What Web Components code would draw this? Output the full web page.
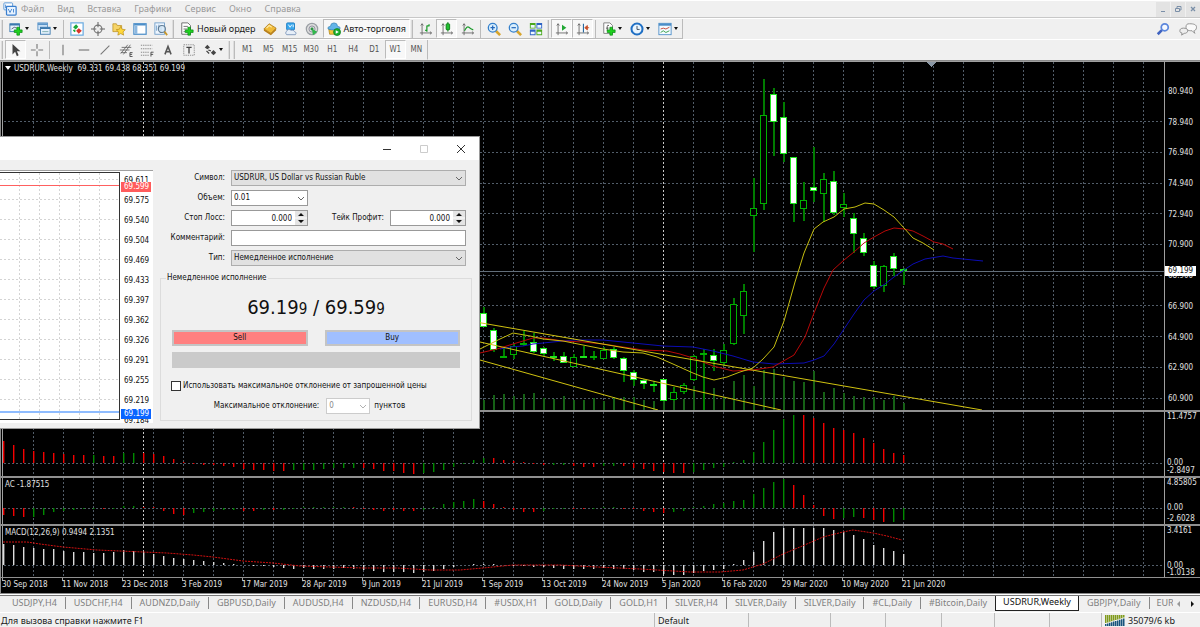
<!DOCTYPE html>
<html lang="ru">
<head>
<meta charset="utf-8">
<title>USDRUR,Weekly</title>
<style>
    body {
        margin: 0;
        background: #f0f0f0;
        overflow-x: hidden;
        font: 9px/12px "Noto Sans", "Open Sans", sans-serif;
        color: #1a1a1a;
        --tahoma: "DejaVu Sans Condensed", "Noto Sans", sans-serif;
    }
</style>
</head>
<body>
<terminal-app></terminal-app>

<script>
function attach(element, html) {
    const template = document.createElement('template')
    template.innerHTML = html
    element.attachShadow({ mode: 'open' }).appendChild(template.content.cloneNode(true))
    return element.shadowRoot
}

const plus = '<path d="M9 6h3v3h3v3h-3v3h-3v-3h-3v-3h3z" fill="#1fd01f" stroke="#0a8a14" stroke-width=".8"/>'
const axes = '<path d="M3.500 2v13M1 12.500h13M2 4l1.500-2 1.500 2M12.500 11l2 1.500-2 1.500" fill="none" stroke="#666"/>'

const icons = {
    app: '<rect x="1" y="1" width="10" height="8" rx="1" fill="#fff" stroke="#4b8fd6"/><rect x="4" y="5" width="11" height="10" rx="1" fill="#e8f3ff" stroke="#3b7fce" stroke-width="1.400"/><path d="M6 8l2 4 2-4M12 8v4M3 3v4" stroke="#3b7fce" fill="none"/>',
    newChart: '<rect x="1" y="2" width="11" height="9" fill="#e6f2fd" stroke="#3b78ad"/><path d="M1 3h11" stroke="#3b78ad" stroke-width="2"/><path d="M3 8l3-2 3 1" stroke="#557" fill="none"/>' + plus,
    profiles: '<rect x="1" y="1" width="11" height="8" fill="#cfe4f8" stroke="#5a94c8"/><path d="M1 2.500h11" stroke="#5a94c8" stroke-width="2"/><rect x="4" y="6" width="11" height="8" fill="#e6f2fd" stroke="#3b78ad"/><path d="M4 7h11" stroke="#3b78ad" stroke-width="2"/><path d="M6 11h7" stroke="#7aa"/>',
    market: '<rect x="1" y="1" width="14" height="14" fill="#fff" stroke="#6aaae0" stroke-width="1.400"/><path d="M3.500 6l3.500-3.500 2.500 3-3 3z" fill="#1aa83a"/><path d="M7 10l3-3 3.500 3-3.500 3.500z" fill="#d8342a"/><path d="M4 9l2 2" stroke="#1aa83a" stroke-width="2"/>',
    cross: '<circle cx="8" cy="8" r="4.500" fill="none" stroke="#777" stroke-width="1.300"/><path d="M8 0v6M8 10v6M0 8h6M10 8h6" stroke="#666" stroke-width="1.200"/>',
    folder: '<path d="M1 2h4l1 2h5v7h-10z" fill="#f6d468" stroke="#b98d1c" stroke-width=".8"/><path d="M10 5l1.600 3.300 3.600.5-2.600 2.500.7 3.700-3.300-1.800-3.300 1.800.7-3.700-2.600-2.500 3.600-.5z" fill="#ffd83a" stroke="#b98d1c" stroke-width=".8"/>',
    panel: '<rect x="1" y="2" width="14" height="12" fill="#fff" stroke="#4c8ec8" stroke-width="1.400"/><path d="M1.500 3h13" stroke="#4c8ec8" stroke-width="2"/><path d="M3.500 4v9.500" stroke="#8db8e0" stroke-width="3"/>',
    tester: '<rect x="1" y="1" width="11" height="13" fill="#eef6ff" stroke="#6c9cc8"/><path d="M3 4v6M5.500 3v6M8 5v6" stroke="#6c9cc8"/><circle cx="9" cy="8" r="4" fill="#d5e9f8" fill-opacity=".8" stroke="#607c94" stroke-width="1.300"/><path d="M12 11l3 4" stroke="#c9972a" stroke-width="2"/>',
    order: '<path d="M2 1h7l3 3v10h-10z" fill="#fff" stroke="#666"/><path d="M4 5h5M4 8h4M4 11h2" stroke="#666"/>' + plus,
    gold: '<path d="M1 8l6-6 8 5-6 6z" fill="#f0bb38" stroke="#a3700f" stroke-width=".8"/><path d="M1 8l8 5 6-6v2.500l-6 5.500-8-5z" fill="#b87d14"/><path d="M4 7l3-3 3 2" stroke="#ffe9a0" fill="none" stroke-width="1.500"/>',
    vps: '<rect x="3" y="1" width="9" height="8" rx="1" fill="#38a8ee" stroke="#1a7ac0"/><path d="M5 3l2 3 2-3M10.500 3v3" stroke="#fff" fill="none"/><path d="M3 14.500a2.500 2.500 0 0 1 0-4 3 3 0 0 1 5-1 3 3 0 0 1 4 1.500 2 2 0 0 1 1 3.500z" fill="#e6eef8" stroke="#7a94b8"/>',
    signal: '<circle cx="8" cy="8" r="6.500" fill="#ddd" stroke="#9a9fa4" stroke-width="1.400"/><circle cx="8" cy="8" r="3.500" fill="none" stroke="#889"/><path d="M8 8l1 7 5-4z" fill="#2fb84a"/><circle cx="8" cy="8" r="1.700" fill="#2a9440"/>',
    auto: '<path d="M2 8l1 6h8l1-6z" fill="#f3c53a" stroke="#a87f14" stroke-width=".8"/><path d="M1 7q0-2 3-2 0-4 4-4t4 4q3 0 3 2t-7 2-7-2z" fill="#62b4e8" stroke="#2f7fb4" stroke-width=".8"/><circle cx="11.500" cy="11.500" r="4" fill="#1bb02c" stroke="#0c7a18" stroke-width=".8"/><path d="M10 9.500l3.500 2-3.500 2z" fill="#fff"/>',
    bars: axes + '<path d="M7 9.500h2M9 4v7M9 4.500h3M11.500 4.500v-2" stroke="#1a9a2a" stroke-width="1.400" fill="none"/>',
    candles: axes + '<path d="M9 0v11" stroke="#0a7a14"/><rect x="7" y="2" width="4" height="7" rx="1" fill="#22c032" stroke="#0a7a14"/>',
    line: axes + '<path d="M4 10q3-6 5-4t5 3" stroke="#1a9a2a" stroke-width="1.300" fill="none"/>',
    zoomIn: '<path d="M10 10l5 5" stroke="#d8a52c" stroke-width="3"/><circle cx="6.500" cy="6.500" r="5" fill="#d9eefc" stroke="#3580cc" stroke-width="1.500"/><path d="M4 6.500h5M6.500 4v5" stroke="#2266bb" stroke-width="1.400"/>',
    zoomOut: '<path d="M10 10l5 5" stroke="#d8a52c" stroke-width="3"/><circle cx="6.500" cy="6.500" r="5" fill="#d9eefc" stroke="#3580cc" stroke-width="1.500"/><path d="M4 6.500h5" stroke="#2266bb" stroke-width="1.400"/>',
    tiles: '<path d="M1 1h6.500v6.500h-6.500zM8.500 8.500h6.500v6.500h-6.500z" fill="#4aa81c"/><path d="M8.500 1h6.500v6.500h-6.500zM1 8.500h6.500v6.500h-6.500z" fill="#2c62c4"/><path d="M2 3.500h4.500v3h-4.500zM9.500 3.500h4.500v3h-4.500zM2 11h4.500v3h-4.500zM9.500 11h4.500v3h-4.500z" fill="#eef6ff"/>',
    scroll: axes + '<path d="M8 3l5 3.500-5 3.500z" fill="#22a835"/>',
    shift: axes + '<path d="M8.500 2v10" stroke="#2a6aa0" stroke-width="1.300"/><path d="M15 6.500h-3M13 4l-3 2.500 3 2.500z" fill="#c8502a" stroke="#c8502a"/>',
    indicator: '<path d="M2 1h7l3 3v9h-10z" fill="#fff" stroke="#777"/><path d="M8 4q-2-1-2 1v5M4.500 7h3" stroke="#555" fill="none"/>' + plus,
    clock: '<circle cx="8" cy="8" r="6.300" fill="#e9f5ff" stroke="#1f6fc4" stroke-width="2.300"/><path d="M8 4.500v4h3" stroke="#345" fill="none"/>',
    template: '<rect x="1" y="1.500" width="14" height="13" fill="#f3faff" stroke="#4c8ec8"/><path d="M1 3h14" stroke="#4c8ec8" stroke-width="2.500"/><path d="M3 8l3-1 3 1 4-2" stroke="#c23a2a" fill="none"/><path d="M3 12l3-2 3 2 4-2" stroke="#2a9a3a" fill="none"/>',
    search: '<path d="M7 9l-5 5" stroke="#3f62c0" stroke-width="3"/><circle cx="10" cy="6" r="4" fill="#f4f8ff" stroke="#5b86dc" stroke-width="2"/>',
    chat: '<path d="M12 2c5 0 8 1 8 4s-2 4-3 4l1 3-3-3c-5 0-7-1-7-4s1-4 4-4z" fill="#fafafa" stroke="#888"/><path d="M5 7c3 0 5 1 5 3s-2 3-4 3l-3 2 .5-2.500c-2 0-2.500-1-2.500-2.500s1-3 4-3z" fill="#eee" stroke="#888"/>',
    cursor: '<path d="M4 1v12l3-3 2 5 2-1-2-4.500h4z" fill="#444"/>',
    hair: '<path d="M8 1v5.500M8 9.500v5.500M1 8h5.500M9.500 8h5.500" stroke="#777" stroke-width="1.300"/>',
    vertical: '<path d="M8 2v12" stroke="#777" stroke-width="1.300"/>',
    horizontal: '<path d="M2 8h12" stroke="#777" stroke-width="1.300"/>',
    trend: '<path d="M3 13l10-10" stroke="#777" stroke-width="1.300"/>',
    channel: '<path d="M2 12l8-10M5 13l8-11M1 8h11M3 5h11M2 11h7" stroke="#666" fill="none"/><path d="M15.500 11h-3v4.500h3M12.500 13h2.500" stroke="#444" fill="none"/>',
    fibo: '<path d="M1 2.500h13M1 6.500h13M1 10.500h10M1 14h9" stroke="#888" stroke-dasharray="1.500 1" stroke-width="1.200"/><path d="M15.500 10.500h-3v5M12.500 13h2.500" stroke="#444" fill="none"/>',
    text: '<path d="M4.500 13l3.500-9 3.500 9M6 10h4" stroke="#555" stroke-width="1.800" fill="none"/>',
    label: '<rect x="2" y="2" width="12" height="12" fill="none" stroke="#888" stroke-dasharray="1.500 1"/><path d="M5 5h6M8 5v7" stroke="#444" stroke-width="1.500"/>',
    arrows: '<path d="M2 5l3-3 3 3-3 2z" fill="#444"/><path d="M6 8l3 1M4 9l3 3" stroke="#444" stroke-width="1.500"/><path d="M9 11l3-3 3 3-3 3z" fill="#444"/>'
}

class IconGlyph extends HTMLElement {
    connectedCallback() {
        const width = this.getAttribute('name') === 'chat' ? 21 : 16
        attach(this, `
            <style>
                :host { display: block; flex: none; }
                svg { display: block; height: 14px; }
            </style>
            <svg viewBox="0 0 ${width} 16" aria-hidden="true">${icons[this.getAttribute('name')]}</svg>
        `)
    }
}

class ToolButton extends HTMLElement {
    connectedCallback() {
        const icon = this.getAttribute('icon')
        attach(this, `
            <style>
                :host { display: block; flex: none; }
                button {
                    display: flex;
                    align-items: center;
                    justify-content: center;
                    gap: 2px;
                    box-sizing: border-box;
                    min-width: 21px;
                    height: 19px;
                    padding: 0 2px;
                    border: 1px solid transparent;
                    background: none;
                    color: inherit;
                    font: inherit;
                    white-space: nowrap;
                }
                :host([pressed]) button { background: #f8f8f8; border-color: #bbb #fff #fff #bbb; }
                :host([menu]) button { width: 28px; }
                :host([menu]) button::after {
                    content: "";
                    border: 2px solid transparent;
                    border-top: 3px solid #111;
                    border-bottom: 0;
                }
                :host([wide]) button { padding: 0 3px; gap: 3px; }
            </style>
            <button type="button" aria-label="${this.getAttribute('hint') || this.textContent.trim()}">
                ${icon ? `<icon-glyph name="${icon}"></icon-glyph>` : ''}<slot></slot>
            </button>
        `)
    }
}

class ToolSeparator extends HTMLElement {
    connectedCallback() {
        attach(this, `
            <style>
                :host { display: block; flex: none; width: 1px; height: 18px; margin: 0 2px; background: #bbb; }
                :host([handle]) { width: 1px; border-right: 1px solid #bbb; background: #ddd; margin: 0 2px 0 1px; }
            </style>
        `)
    }
}

class TerminalBars extends HTMLElement {
    connectedCallback() {
        const menus = ['Файл', 'Вид', 'Вставка', 'Графики', 'Сервис', 'Окно', 'Справка']
        const frames = ['M1', 'M5', 'M15', 'M30', 'H1', 'H4', 'D1', 'W1', 'MN']
        const button = (icon, hint, extra = '') => `<tool-button icon="${icon}" hint="${hint}" ${extra}></tool-button>`
        attach(this, `
            <style>
                :host { display: block; }
                nav {
                    display: flex;
                    align-items: center;
                    box-sizing: border-box;
                    height: 18px;
                    padding-left: 3px;
                    border-top: 1px solid #fff;
                    border-bottom: 1px solid #c8c8c8;
                }
                nav a { color: #9a9a9a; text-decoration: none; margin-right: 13px; }
                nav icon-glyph { margin-right: 4px; }
                .system { display: flex; gap: 1px; margin-left: auto; }
                .system button { width: 14px; height: 15px; padding: 0; border: 0; background: #e3e3e3; }
                .system svg { display: block; margin: auto; }
                .row { display: flex; align-items: center; box-sizing: border-box; height: 21px; border-top: 1px solid #fff; }
                .tools { display: flex; align-items: center; border-bottom: 1px solid #bbb; border-right: 1px solid #bbb; }
                .row + .row .tools { border-bottom-color: transparent; }
                .frames { display: flex; font: 8px/12px var(--tahoma); color: #555; }
                .side { display: flex; gap: 9px; margin: 0 3px 0 auto; }
            </style>
            <nav>
                <icon-glyph name="app"></icon-glyph>
                ${menus.map(name => `<a href="#">${name}</a>`).join('')}
                <div class="system">
                    <button aria-label="Свернуть"><svg width="8" height="8"><path d="M2 6.500h4" stroke="#7a8fa8"/></svg></button>
                    <button aria-label="Восстановить"><svg width="8" height="8"><path d="M1.500 3.500h4v3h-4zM3 3v-1.500h4v3.500h-1" fill="none" stroke="#7a8fa8"/></svg></button>
                    <button aria-label="Закрыть"><svg width="8" height="8"><path d="M2 2l4 4M6 2l-4 4" stroke="#7a8fa8" stroke-width="1.300"/></svg></button>
                </div>
            </nav>
            <div class="row">
                <div class="tools">
                    <tool-separator handle></tool-separator>
                    ${button('newChart', 'Новый график', 'menu')}${button('profiles', 'Профили', 'menu')}
                    <tool-separator></tool-separator>
                    ${button('market', 'Обзор рынка')}${button('cross', 'Окно данных')}${button('folder', 'Навигатор')}${button('panel', 'Терминал')}${button('tester', 'Тестер стратегий')}
                    <tool-separator handle></tool-separator>
                    <tool-button icon="order" wide>Новый ордер</tool-button>
                    ${button('gold', 'MetaEditor')}${button('vps', 'VPS')}${button('signal', 'Сигналы')}
                    <tool-button icon="auto" wide pressed>Авто-торговля</tool-button>
                    <tool-separator handle></tool-separator>
                    ${button('bars', 'Бары')}${button('candles', 'Свечи', 'pressed')}${button('line', 'Линия')}
                    <tool-separator></tool-separator>
                    ${button('zoomIn', 'Увеличить')}${button('zoomOut', 'Уменьшить')}${button('tiles', 'Окна мозаикой')}
                    <tool-separator handle></tool-separator>
                    ${button('scroll', 'Автопрокрутка', 'pressed')}${button('shift', 'Сдвиг графика', 'pressed')}
                    <tool-separator></tool-separator>
                    ${button('indicator', 'Индикаторы', 'menu')}${button('clock', 'Периоды', 'menu')}${button('template', 'Шаблоны', 'menu')}
                </div>
                <div class="side"><icon-glyph name="search"></icon-glyph><icon-glyph name="chat"></icon-glyph></div>
            </div>
            <div class="row">
                <div class="tools">
                    <tool-separator handle></tool-separator>
                    ${button('cursor', 'Курсор', 'pressed')}${button('hair', 'Перекрестие')}
                    <tool-separator></tool-separator>
                    ${button('vertical', 'Вертикальная линия')}${button('horizontal', 'Горизонтальная линия')}${button('trend', 'Трендовая линия')}${button('channel', 'Канал')}${button('fibo', 'Фибоначчи')}${button('text', 'Текст')}${button('label', 'Метка')}${button('arrows', 'Стрелки', 'menu')}
                    <tool-separator handle></tool-separator>
                    <tool-separator handle></tool-separator>
                    <div class="frames">
                        ${frames.map(name => `<tool-button ${name === 'W1' ? 'pressed' : ''}>${name}</tool-button>`).join('')}
                    </div>
                </div>
            </div>
        `)
    }
}

// Bars are 10px apart, the first one sits on x = 3.5
const barX = index => 3.5 + index * 10
const FIRST_CANDLE = 48

// high, low, body top, body bottom, falling
const candles = [
    [245, 265, 251, 265, 1], [266, 290, 268, 288, 1], [285, 296, 294, 296, 0], [282, 297, 284, 293, 0], [269, 284, 281, 283, 0],
    [271, 291, 280, 290, 1], [285, 294, 286, 292, 1], [290, 299, 294, 296, 1], [290, 301, 294, 301, 1], [292, 305, 295, 305, 0],
    [284, 296, 294, 295, 1], [289, 298, 294, 295, 0], [285, 297, 288, 297, 0], [285, 297, 287, 296, 1], [295, 320, 296, 309, 1],
    [308, 324, 310, 318, 1], [317, 327, 318, 322, 1], [319, 330, 322, 323, 1], [317, 339, 317, 339, 1], [325, 339, 330, 338, 0],
    [321, 332, 323, 330, 0], [293, 319, 294, 318, 0], [287, 348, 291, 293, 0], [287, 309, 293, 299, 1], [282, 304, 288, 301, 0],
    [236, 283, 242, 282, 0], [222, 272, 229, 254, 0], [116, 190, 146, 154, 0], [17, 148, 53, 142, 0], [26, 94, 32, 60, 1],
    [40, 100, 55, 92, 1], [95, 160, 95, 142, 1], [120, 159, 138, 147, 0], [85, 140, 125, 129, 1], [111, 160, 117, 132, 0],
    [109, 153, 119, 151, 1], [131, 155, 142, 146, 0], [151, 191, 156, 172, 1], [171, 194, 176, 191, 1], [199, 227, 203, 225, 1],
    [203, 230, 204, 224, 0], [191, 214, 194, 207, 1], [206, 223, 207, 209, 1]
]
const volumes = [10, 15, 16, 14, 16, 17, 12, 11, 14, 10, 10, 12, 9, 13, 13, 13, 10, 9, 12, 10, 11, 24, 33, 22, 13, 29, 35, 24, 40, 41, 33, 29, 28, 39, 18, 22, 17, 14, 13, 13, 10, 14, 7]

const averages = {
    '#0c0cb4': '500,287 510,285 523,284 533,282 553,280 573,278 603,278 623,280 643,282 663,284 693,285 713,289 733,294 753,300 774,302 804,301 814,298 824,294 834,282 844,267 854,252 864,238 874,229 885,222 894,215 907,206 913,202 925,197 943,194 953,196 973,198 983,199',
    '#b80808': '480,291 497,287 513,282 523,279 533,276 543,276 563,279 583,280 603,282 623,285 643,288 667,289 680,292 693,296 713,304 733,309 753,308 773,305 794,293 805,275 814,251 824,226 833,208 844,198 854,190 864,181 874,175 885,169 894,166 904,167 913,169 923,174 934,180 943,182 953,187',
    '#c4bc10': '480,287 500,277 513,271 530,274 543,277 563,279 583,283 603,287 623,290 643,291 657,295 673,302 693,311 703,315 714,318 727,315 740,310 753,306 763,297 774,285 784,259 795,220 804,191 814,167 823,160 834,155 844,147 855,145 865,141 874,142 884,148 894,155 904,166 913,176 923,181 934,188'
}
const channel = ['470,259 982,348', '480,280 781,348', '480,298 658,348']

// Signed heights; g marks a bar that is higher than the one before
const awesome = '22 18 14 12 11 10 9 8 8 8g 7 7 10g 10g 10 9 7 4 1 -1 -2 -2 -3 -4 -6 -7 -7 -8 -8 -7g -7g -7g -6g -5g -5g -5g -5 -6 -8 -8 -10 -11 -10g -9g -7g -4g -1g 3g 5g 5 3 2 1 -1 -2 -2g -2g -3 -4 -4 -3g -3g -3 -5 -6 -8 -9 -10 -10 -9g -7g -5g -4g 1g 3g 11g 21g 33g 44g 48g 48 45 40 35 33 30 25 20 14 10 8'
const accelerator = '-7 -8 -9 -9g -7g -4g -3g -2g -1g -1g -1 -1g 2g 2g 1 1 -3 -6 -7 -5g -4g -3g -2g -2g -3 -3 -2g -2 -2g -1g 1g 1g 1g 1g 1g 1 -1 -2 -3 -2 -3 -3 -2g 1g 4g 6g 7g 9g 7 4 1 -2 -4 -4 -3g -1g -1g -1 -1 -1g 1g 1g -1 -1 -3 -4 -5 -4g -3g 1g 2g 4g 5g 7g 8g 14g 20g 26g 29g 23 13 3 -8 -11 -10g -9g -10 -12 -14 -14g -12g'
const macd = '21 20 18 17 16 16 14 13 13 12 12 13 15 14 13 11 9 7 6 5 4 3 2 1 0 -1 -1 -2 -3 -4 -3 -4 -4 -4 -3 -4 -5 -6 -7 -7 -7 -8 -7 -6 -4 -2 0 1 1 1 0 -1 -1 -2 -2 -3 -4 -4 -4 -4 -3 -4 -4 -5 -7 -7 -9 -10 -10 -8 -6 -5 -4 1 5 13 24 33 37 37 37 37 37 35 33 30 26 20 17 14 11'
const signalLine = '3,16 27,16 40,18 63,21 97,24 120,25 143,26 167,27 193,29 213,31 243,35 273,37 300,40 330,41 363,42 397,42 430,44 460,44 483,42 513,39 560,39 597,41 640,43 690,46 720,46 743,44 763,38 783,28 800,21 823,11 843,6 853,4 860,5 873,7 887,10 902,14'

function verticalGrid(height) {
    let lines = ''
    for (let index = 3; index < 400; index += 3)
        lines += `<path d="M${barX(index)} 0v${height}" stroke="#525d69" stroke-dasharray="2 2"/>`
    for (const index of [14, 66])
        lines += `<path d="M${barX(index)} 0v${height}" stroke="#c8c8c8" stroke-dasharray="2 2"/>`
    return lines
}

function horizontalGrid(y) {
    return `<path d="M4 ${y}h4000" stroke="#525d69" stroke-dasharray="2 2"/>`
}

function bar(index, from, height, colour, width) {
    return `<rect x="${Math.floor(barX(index))}" y="${Math.min(from, from - height)}" width="${width}" height="${Math.abs(height)}" fill="${colour}"/>`
}

function histogram(data, zero, up, down) {
    const bars = data.split(' ').map((item, index) =>
        bar(index, zero, parseInt(item), item.endsWith('g') ? up : down, 1.4)
    )
    return `<g shape-rendering="auto">${bars.join('')}</g>`
}

function drawPrice() {
    let svg = ''
    for (let row = 0; row < 11; row++)
        svg += horizontalGrid(Math.floor(29.3 + row * 30.67) + 0.5)
    svg += '<path d="M4 209.500h4000" stroke="#626e7a"/>'
    volumes.forEach((value, index) => {
        svg += bar(index + FIRST_CANDLE, 348, value, '#166016', 2)
    })
    candles.forEach(([high, low, top, bottom, falling], index) => {
        const x = barX(index + FIRST_CANDLE)
        svg += bar(index + FIRST_CANDLE, low, low - high, '#007c00', 2)
        svg += `<rect x="${x - 3}" y="${top + 0.5}" width="6" height="${Math.max(bottom - top - 1, 1)}" fill="${falling ? '#fff' : '#000'}" stroke="${falling ? '#1ee61e' : '#00ae00'}"/>`
    })
    svg += '<g shape-rendering="auto" fill="none">'
    for (const colour in averages)
        svg += `<polyline points="${averages[colour]}" stroke="${colour}"/>`
    for (const points of channel)
        svg += `<polyline points="${points}" stroke="#d0c210"/>`
    return svg + '</g><path d="M926 0h10l-5 5z" fill="#8996a4"/>'
}

const panes = {
    price: { height: 348, draw: drawPrice },
    awesome: { height: 64, draw: () => horizontalGrid(51.5) + histogram(awesome, 51, '#008a00', '#f40000') },
    accelerator: { height: 46, draw: () => horizontalGrid(30.5) + histogram(accelerator, 30, '#008a00', '#f40000') },
    macd: {
        height: 51,
        draw: () => horizontalGrid(39.5) + histogram(macd, 39, '#ddd', '#ddd') +
            `<polyline points="${signalLine}" fill="none" stroke="#d01010" stroke-dasharray="2 1" shape-rendering="auto"/>`
    }
}

class ChartPane extends HTMLElement {
    connectedCallback() {
        const pane = panes[this.getAttribute('type')]
        const labels = this.getAttribute('labels').split(' ')
        const tag = this.getAttribute('tag')
        attach(this, `
            <style>
                :host { display: flex; border-bottom: 2px solid #909090; position: relative; }
                :host([type=price]) { border-top: 1px solid #a0a0a0; }
                :host([type=macd]) { border-bottom-width: 1px; }
                .plot { flex: 1; min-width: 0; position: relative; overflow: hidden; border-right: 1px solid #a0a0a0; }
                svg { display: block; width: 100%; height: ${pane.height}px; }
                .title { position: absolute; left: 5px; top: 2px; white-space: pre; line-height: 10px; }
                .axis {
                    display: flex;
                    flex-direction: column;
                    box-sizing: border-box;
                    width: 35px;
                    height: ${pane.height}px;
                    padding: 1px 0 1px 2px;
                    line-height: 8px;
                }
                .axis span:first-child { margin-bottom: auto; }
                :host([type=price]) .axis { justify-content: space-between; padding: 26px 0 7px 3px; }
                :host([type=price]) .axis span { margin: 0; }
                :host([type=accelerator]) .axis { gap: 3px; }
                :host([type=macd]) .axis { line-height: 7px; }
                .tag {
                    position: absolute;
                    right: 4px;
                    top: 204px;
                    width: 31px;
                    box-sizing: border-box;
                    padding: 1px 0 1px 3px;
                    background: #fff;
                    color: #111;
                    line-height: 8px;
                }
            </style>
            <div class="plot">
                <svg shape-rendering="crispEdges">
                    ${verticalGrid(pane.height)}
                    ${pane.draw()}
                    <path d="M2.500 0v${pane.height}" stroke="#a0a0a0"/>
                </svg>
                <div class="title"><slot></slot></div>
            </div>
            <div class="axis">${labels.map(label => `<span>${label}</span>`).join('')}</div>
            ${tag ? `<div class="tag">${tag}</div>` : ''}
        `)
    }
}

class ChartWindow extends HTMLElement {
    connectedCallback() {
        const dates = ['30 Sep 2018', '11 Nov 2018', '23 Dec 2018', '3 Feb 2019', '17 Mar 2019', '28 Apr 2019', '9 Jun 2019', '21 Jul 2019',
            '1 Sep 2019', '13 Oct 2019', '24 Nov 2019', '5 Jan 2020', '16 Feb 2020', '29 Mar 2020', '10 May 2020', '21 Jun 2020']
        attach(this, `
            <style>
                :host {
                    display: block;
                    position: relative;
                    background: #000;
                    color: #e0e0e0;
                    border-top: 1px solid #8a8a8a;
                    border-left: 1px solid #8a8a8a;
                    border-bottom: 1px solid #8a8a8a;
                    font: 8px/10px var(--tahoma);
                }
                chart-pane { margin-left: -1px; }
                .arrow { display: inline-block; margin: 0 3px 1px 0; border: 3px solid transparent; border-top: 4px solid #fff; border-bottom: 0; }
                .dates { display: flex; overflow: hidden; padding-left: 1px; height: 15px; }
                .dates span { flex: 0 0 60px; line-height: 14px; white-space: nowrap; }
                .dates span::before { content: ""; float: left; width: 1px; height: 3px; margin-right: -1px; background: #a0a0a0; }
                order-window { position: absolute; left: -1px; top: 75px; }
            </style>
            <chart-pane type="price" tag="69.199" labels="80.940 78.940 76.940 74.940 72.940 70.900 68.900 66.900 64.900 62.900 60.900"><i class="arrow"></i>USDRUR,Weekly  69.331 69.438 68.351 69.199</chart-pane>
            <chart-pane type="awesome" labels="11.4757 0.00 -2.8497"></chart-pane>
            <chart-pane type="accelerator" labels="4.85805 0.00 -2.6028">AC -1.87515</chart-pane>
            <chart-pane type="macd" labels="3.4161 0.00 -1.0138">MACD(12,26,9) 0.9494 2.1351</chart-pane>
            <div class="dates">${dates.map(date => `<span>${date}</span>`).join('')}</div>
            <order-window></order-window>
        `)
    }
}

class TickChart extends HTMLElement {
    connectedCallback() {
        const prices = ['69.611', '69.575', '69.540', '69.504', '69.469', '69.433', '69.397', '69.362', '69.326', '69.291', '69.255', '69.219', '69.184']
        let grid = ''
        for (let index = 0; index < 12; index++)
            grid += `<path d="M0 ${8.5 + index * 20}h119" stroke="#d4d4d4" stroke-dasharray="2 2"/>`
        for (let index = 0; index < 5; index++)
            grid += `<path d="M${19.5 + index * 20} 2v246" stroke="#d4d4d4" stroke-dasharray="2 2"/>`
        attach(this, `
            <style>
                :host {
                    display: flex;
                    flex: none;
                    position: relative;
                    width: 153px;
                    height: 252px;
                    overflow: hidden;
                    background: #fff;
                    border-top: 1px solid #a0a0a0;
                }
                svg { flex: none; width: 121px; height: 252px; }
                .prices { padding-left: 3px; line-height: 20px; }
                .prices span { display: block; }
                .tag { position: absolute; left: 121px; width: 30px; box-sizing: border-box; padding: 1px 0 1px 3px; line-height: 8px; color: #fff; }
                .ask { top: 11px; background: #ff5c5c; }
                .bid { top: 238px; background: #0a64ff; }
            </style>
            <svg shape-rendering="crispEdges">
                ${grid}
                <path d="M0 14.500h119" stroke="#ff6060"/>
                <path d="M0 241h119" stroke="#8fbcff" stroke-width="2"/>
                <path d="M0 1.500h119.500v247h-119.500" fill="none" stroke="#333"/>
            </svg>
            <div class="prices">${prices.map(price => `<span>${price}</span>`).join('')}</div>
            <div class="tag ask">69.599</div>
            <div class="tag bid">69.199</div>
        `)
    }
}

class OrderWindow extends HTMLElement {
    connectedCallback() {
        const spinner = '<svg class="spin" width="12" height="14"><path d="M0 0h12v6.500h-12zM0 7.500h12v6.500h-12z" fill="#e4e4e4"/><path d="M3 5l3-3 3 3zM3 9l3 3 3-3z" fill="#111"/></svg>'
        const chevron = '<svg class="chevron" width="8" height="5"><path d="M1 1l3 3 3-3" fill="none" stroke="#666"/></svg>'
        attach(this, `
            <style>
                :host {
                    display: block;
                    width: 480px;
                    box-sizing: border-box;
                    background: #f0f0f0;
                    border: 1px solid #9a9a9a;
                    border-left: 0;
                    color: #111;
                    font: 8px/10px var(--tahoma);
                }
                header { display: flex; justify-content: flex-end; gap: 27px; padding-right: 13px; background: #fff; height: 23px; align-items: center; }
                header button { width: 10px; height: 10px; padding: 0; border: 0; background: none; }
                header svg { display: block; }
                main { display: flex; padding: 10px 7px 5px 0; }
                .form { flex: 1; min-width: 0; margin-left: 7px; }
                .fields {
                    display: grid;
                    grid-template-columns: 65px 77px 70px 76px;
                    gap: 4px 6px;
                    justify-content: end;
                    padding-right: 6px;
                }
                .fields label { text-align: right; line-height: 16px; white-space: nowrap; }
                .full { grid-column: span 3; }
                .box { position: relative; display: flex; }
                input, select {
                    width: 100%;
                    min-width: 0;
                    height: 16px;
                    box-sizing: border-box;
                    margin: 0;
                    padding: 0 3px;
                    border: 1px solid #999;
                    border-radius: 0;
                    background: #fff;
                    color: inherit;
                    font: inherit;
                    appearance: none;
                }
                select { padding: 0 2px; }
                .grey { background: #e1e1e1; border-color: #adadad; }
                .number { padding-right: 15px; text-align: right; }
                .spin { position: absolute; right: 1px; top: 1px; }
                .chevron { position: absolute; right: 3px; top: 6px; }
                fieldset { margin: 7px 0 0; padding: 0 11px 6px; border: 1px solid #dcdcdc; min-width: 0; }
                legend { margin-left: -6px; padding: 0 1px; }
                .quote { text-align: center; font-size: 20px; line-height: 24px; margin: 12px 0 9px; }
                .quote small { font-size: 15px; }
                .deal { display: grid; grid-template-columns: 1fr 1fr; gap: 6px 17px; }
                .deal button { height: 16px; padding: 0; border: 2px solid #c4c4c4; color: inherit; font: inherit; }
                .sell { background: #ff8080; }
                .buy { background: #a0bfff; }
                .bar { grid-column: span 2; height: 16px; background: #cacaca; }
                .check { display: flex; align-items: center; gap: 2px; margin: 13px 0 7px -1px; white-space: nowrap; }
                .check input { width: 10px; height: 10px; padding: 0; flex: none; border-color: #333; }
                .limit { display: flex; align-items: center; justify-content: center; padding-right: 13px; gap: 4px; white-space: nowrap; }
                .limit .box { width: 44px; margin-left: 3px; }
                .limit select { color: #888; border-color: #ccc; opacity: 1; }
                .limit .chevron { opacity: .5; }
            </style>
            <header>
                <button aria-label="Свернуть"><svg width="10" height="10"><path d="M1 5.500h8" stroke="#333"/></svg></button>
                <button aria-label="Развернуть" disabled><svg width="10" height="10"><path d="M1.500 1.500h7v7h-7z" fill="none" stroke="#ccc"/></svg></button>
                <button aria-label="Закрыть"><svg width="10" height="10"><path d="M1 1l8 8M9 1l-8 8" stroke="#333"/></svg></button>
            </header>
            <main>
                <tick-chart></tick-chart>
                <div class="form">
                    <div class="fields">
                        <label for="symbol">Символ:</label>
                        <div class="box full"><select id="symbol" class="grey"><option>USDRUR, US Dollar vs Russian Ruble</option></select>${chevron}</div>
                        <label for="volume">Объем:</label>
                        <div class="box"><select id="volume"><option>0.01</option></select>${chevron}</div>
                        <span></span><span></span>
                        <label for="stop">Стоп Лосс:</label>
                        <div class="box"><input id="stop" class="number" value="0.000">${spinner}</div>
                        <label for="take">Тейк Профит:</label>
                        <div class="box"><input id="take" class="number" value="0.000">${spinner}</div>
                        <label for="comment">Комментарий:</label>
                        <div class="box full"><input id="comment"></div>
                        <label for="type">Тип:</label>
                        <div class="box full"><select id="type" class="grey"><option>Немедленное исполнение</option></select>${chevron}</div>
                    </div>
                    <fieldset>
                        <legend>Немедленное исполнение</legend>
                        <div class="quote">69.19<small>9</small> / 69.59<small>9</small></div>
                        <div class="deal">
                            <button class="sell">Sell</button>
                            <button class="buy">Buy</button>
                            <div class="bar"></div>
                        </div>
                        <div class="check"><input type="checkbox" id="deviation"><label for="deviation">Использовать максимальное отклонение от запрошенной цены</label></div>
                        <div class="limit">
                            <label for="points">Максимальное отклонение:</label>
                            <div class="box"><select id="points" disabled><option>0</option></select>${chevron}</div>
                            <span>пунктов</span>
                        </div>
                    </fieldset>
                </div>
            </main>
        `)
    }
}

class ChartTabs extends HTMLElement {
    connectedCallback() {
        const tabs = ['USDJPY,H4', 'USDCHF,H4', 'AUDNZD,Daily', 'GBPUSD,Daily', 'AUDUSD,H4', 'NZDUSD,H4', 'EURUSD,H4', '#USDX,H1', 'GOLD,Daily', 'GOLD,H1',
            'SILVER,H4', 'SILVER,Daily', 'SILVER,Daily', '#CL,Daily', '#Bitcoin,Daily', 'USDRUR,Weekly', 'GBPJPY,Daily', 'EUR']
        attach(this, `
            <style>
                :host { display: flex; height: 18px; box-sizing: border-box; border-top: 1px solid #fff; background: #f0f0f0; }
                .list { flex: 1; min-width: 0; display: flex; overflow: hidden; padding-left: 2px; border-top: 1px solid #777; }
                a {
                    flex: none;
                    height: 12px;
                    margin: 1px 0 2px;
                    padding: 0 8px;
                    border-right: 1px solid #888;
                    color: #808080;
                    line-height: 12px;
                    text-decoration: none;
                }
                a:first-child { padding-left: 10px; }
                a:last-child { padding: 0 0 0 7px; border: 0; }
                a.active { margin: -1px 0 0 -1px; height: 14px; padding: 1px 7px 0; background: #fff; color: #111; border: 1px solid #222; border-top: 0; }
                .scroll { display: flex; align-items: center; justify-content: space-between; width: 17px; padding: 0 6px 0 4px; border-top: 1px solid #777; }
                i { border: 3px solid transparent; }
                .left { border-left: 0; border-right-color: #999; }
                .right { border-right: 0; border-left-color: #111; }
            </style>
            <div class="list">${tabs.map(name => `<a href="#" ${name === 'USDRUR,Weekly' ? 'class="active"' : ''}>${name}</a>`).join('')}</div>
            <div class="scroll"><i class="left"></i><i class="right"></i></div>
        `)
    }
}

class StatusBar extends HTMLElement {
    connectedCallback() {
        let bars = ''
        for (let index = 0; index < 10; index++)
            bars += `<path d="M${index * 2 + 0.75} 0v${8 - index * 0.6}" stroke="#7f9a1c" stroke-width="1.500"/><path d="M${index * 2 + 0.75} 11v${-(2 + index * 0.6)}" stroke="#17547c" stroke-width="1.500"/>`
        attach(this, `
            <style>
                :host {
                    display: grid;
                    grid-template-columns: 1fr 94px 82px 55px 56px 53px 55px 52px 99px;
                    height: 16px;
                    box-sizing: border-box;
                    border-top: 1px solid #fff;
                }
                span { display: flex; align-items: center; gap: 3px; padding-left: 3px; border-left: 1px solid #bbb; white-space: nowrap; }
                span:first-of-type { border: 0; padding-left: 1px; }
            </style>
            <span>Для вызова справки нажмите F1</span><span>Default</span>
            <span></span><span></span><span></span><span></span><span></span><span></span>
            <span><svg width="20" height="11">${bars}</svg>35079/6 kb</span>
        `)
    }
}

class TerminalApp extends HTMLElement {
    connectedCallback() {
        attach(this, `
            <style>
                :host { display: block; }
            </style>
            <terminal-bars></terminal-bars>
            <chart-window></chart-window>
            <chart-tabs></chart-tabs>
            <status-bar></status-bar>
        `)
    }
}

customElements.define('icon-glyph', IconGlyph)
customElements.define('tool-button', ToolButton)
customElements.define('tool-separator', ToolSeparator)
customElements.define('terminal-bars', TerminalBars)
customElements.define('chart-pane', ChartPane)
customElements.define('tick-chart', TickChart)
customElements.define('order-window', OrderWindow)
customElements.define('chart-window', ChartWindow)
customElements.define('chart-tabs', ChartTabs)
customElements.define('status-bar', StatusBar)
customElements.define('terminal-app', TerminalApp)
</script>
</body>
</html>
